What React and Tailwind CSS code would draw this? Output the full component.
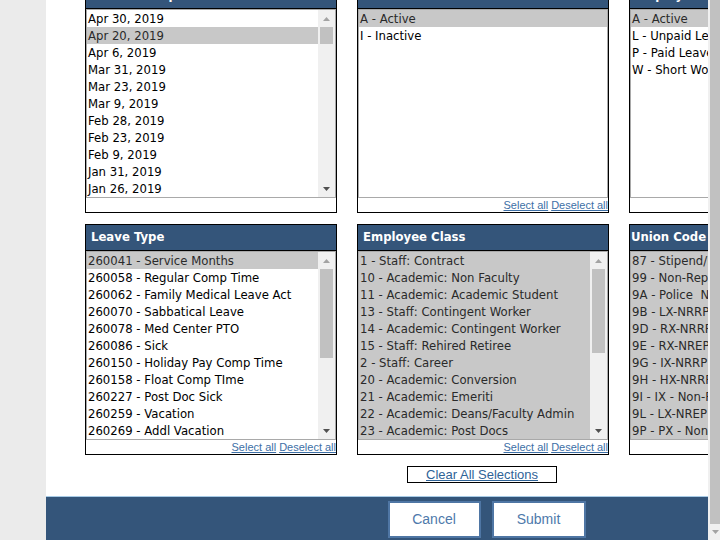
import clsx from 'clsx';

const PANELS_TOP = [
  {
    title: 'Accrual Snapshot Date',
    items: ['Apr 30, 2019', 'Apr 20, 2019', 'Apr 6, 2019', 'Mar 31, 2019', 'Mar 23, 2019', 'Mar 9, 2019', 'Feb 28, 2019', 'Feb 23, 2019', 'Feb 9, 2019', 'Jan 31, 2019', 'Jan 26, 2019'],
    selected: [1],
    thumb: 17,
    links: false,
  },
  {
    title: 'HR Status',
    items: ['A - Active', 'I - Inactive'],
    selected: [0],
  },
  {
    title: 'Employee Status',
    items: ['A - Active', 'L - Unpaid Leave', 'P - Paid Leave', 'W - Short Work Break'],
    selected: [0],
  },
];

const PANELS_BOTTOM = [
  {
    title: 'Leave Type',
    items: ['260041 - Service Months', '260058 - Regular Comp Time', '260062 - Family Medical Leave Act', '260070 - Sabbatical Leave', '260078 - Med Center PTO', '260086 - Sick', '260150 - Holiday Pay Comp Time', '260158 - Float Comp TIme', '260227 - Post Doc Sick', '260259 - Vacation', '260269 - Addl Vacation'],
    selected: [0],
    thumb: 89,
  },
  {
    title: 'Employee Class',
    items: ['1 - Staff: Contract', '10 - Academic: Non Faculty', '11 - Academic: Academic Student', '13 - Staff: Contingent Worker', '14 - Academic: Contingent Worker', '15 - Staff: Rehired Retiree', '2 - Staff: Career', '20 - Academic: Conversion', '21 - Academic: Emeriti', '22 - Academic: Deans/Faculty Admin', '23 - Academic: Post Docs'],
    all: true,
    thumb: 84,
  },
  {
    title: 'Union Code',
    tight: true,
    items: ['87 - Stipend/Fellowship', '99 - Non-Represented', '9A - Police  Non-Rep', '9B - LX-NRRP Non-Rep', '9D - RX-NRRP Non-Rep', '9E - RX-NREP Non-Rep', '9G - IX-NRRP Non-Rep', '9H - HX-NRRP Non-Rep', '9I - IX - Non-Rep', '9L - LX-NREP Non-Rep', '9P - PX - Non-Rep'],
    all: true,
    thumb: 80,
  },
];

function Arrow({ up, className }) {
  return (
    <svg width="7" height="4" viewBox="0 0 7 4" className={className}>
      <path d={up ? 'M0 4 L3.5 0 L7 4 Z' : 'M0 0 L3.5 4 L7 0 Z'} fill="currentColor" />
    </svg>
  );
}

function ListScroll({ thumb }) {
  return (
    <div className="w-[17px] shrink-0 bg-[#f0f0f0] flex flex-col">
      <div className="h-[17px] flex items-center justify-center text-[#a3a3a3]">
        <Arrow up />
      </div>
      <div className="flex-1">
        <div className="mx-[2px] bg-[#c1c1c1]" style={{ height: thumb }} />
      </div>
      <div className="h-[17px] flex items-center justify-center text-[#505050]">
        <Arrow />
      </div>
    </div>
  );
}

function Panel({ title, items, selected = [], all, thumb, links = true, tight }) {
  return (
    <div className="w-[252px] shrink-0 border border-black bg-white flex flex-col">
      {/* Header */}
      <div className={clsx(
        "h-[26px] bg-[#34557a] border-b border-black flex items-center text-white font-bold text-[11.7px] font-['DejaVu_Sans',sans-serif] whitespace-nowrap overflow-hidden",
        tight ? 'px-[1px]' : 'px-[5px]'
      )}>
        {title}
      </div>

      {/* List box */}
      <div className={clsx('h-[189px] border border-[#a9a9a9] flex', all ? 'bg-[#c8c8c8]' : 'bg-white')}>
        <div className="flex-1 min-w-0 overflow-hidden">
          {items.map((item, i) => (
            <div
              key={item}
              className={clsx(
                "h-[17px] pl-[1px] pt-[1px] leading-[16px] text-[11.7px] font-['DejaVu_Sans',sans-serif] whitespace-pre",
                all || selected.includes(i) ? 'bg-[#c8c8c8] text-[#2a2a2a]' : 'text-black'
              )}
            >
              {item}
            </div>
          ))}
        </div>
        {thumb && <ListScroll thumb={thumb} />}
      </div>

      {/* Footer links */}
      <div className="h-[14px] flex justify-end items-center gap-[3px] text-[11px] leading-none font-['Liberation_Sans',Arial,sans-serif] text-[#3d6fa6]">
        {links && (
          <>
            <span className="underline">Select all</span>
            <span className="underline">Deselect all</span>
          </>
        )}
      </div>
    </div>
  );
}

export default function App() {
  return (
    <div className="w-[720px] h-[540px] overflow-hidden flex bg-[#ebebeb]">
      <div className="w-[46px] shrink-0" />

      {/* Content */}
      <div className="w-[662px] shrink-0 bg-white overflow-hidden">
        <div className="w-[874px] h-full flex flex-col">
          <div className="-mt-[18px] px-[39px] flex flex-col gap-[11px]">
            <div className="flex gap-[20px]">
              {PANELS_TOP.map((p) => <Panel key={p.title} {...p} />)}
            </div>
            <div className="flex gap-[20px]">
              {PANELS_BOTTOM.map((p) => <Panel key={p.title} {...p} />)}
            </div>
          </div>

          <div className="mt-[11px] ml-[361px] w-[150px] h-[17px] border border-black flex items-center justify-center text-[13px] leading-none font-['Liberation_Sans',Arial,sans-serif] text-[#2f6397] underline">
            Clear All Selections
          </div>

          <div className="mt-[13px] flex-1 border-t border-[#a8cbe6] bg-[#34557a] pt-[4px] pl-[7px] flex justify-center gap-[11px]">
            <button className="w-[93px] h-[37px] bg-white border-2 border-[#4f76a4] text-[14px] text-[#4e79ab] font-['Liberation_Sans',Arial,sans-serif]">
              Cancel
            </button>
            <button className="w-[94px] h-[37px] bg-white border-2 border-[#4f76a4] text-[14px] text-[#4e79ab] font-['Liberation_Sans',Arial,sans-serif]">
              Submit
            </button>
          </div>
        </div>
      </div>

      {/* Page scrollbar */}
      <div className="w-[12px] shrink-0 bg-[#f0f0f0] flex flex-col">
        <div className="h-[524px] ml-[2px] bg-[#c1c1c1]" />
        <div className="flex-1 flex items-center justify-center pl-[3px] text-[#a3a3a3]">
          <Arrow />
        </div>
      </div>
    </div>
  );
}
